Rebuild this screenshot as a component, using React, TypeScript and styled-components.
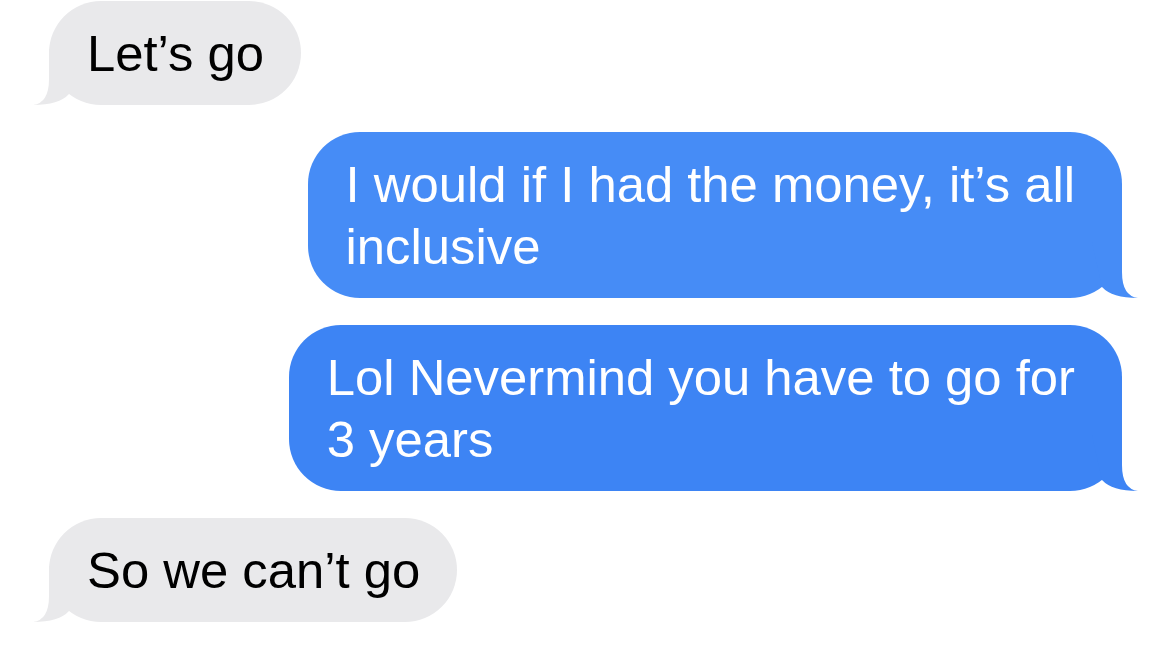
import styled, { createGlobalStyle } from 'styled-components';

const GlobalStyle = createGlobalStyle`
  html, body {
    margin: 0;
    padding: 0;
    background: #ffffff;
    overflow: hidden;
  }
`;

const GRAY = '#e9e9eb';

const Thread = styled.div`
  display: flex;
  flex-direction: column;
  gap: 27px;
  padding: 1px 48px 0 49px;
  font-family: 'Liberation Sans', Arial, sans-serif;
`;

const Bubble = styled.div<{ $sent?: boolean; $bg: string }>`
  position: relative;
  align-self: ${({ $sent }) => ($sent ? 'flex-end' : 'flex-start')};
  width: fit-content;
  padding: 22px ${({ $sent }) => ($sent ? '47px' : '37px')} 20px 38px;
  border-radius: 52px;
  background: ${({ $bg }) => $bg};
  color: ${({ $sent }) => ($sent ? '#ffffff' : '#000000')};
  font-size: 50.8px;
  line-height: 62px;
  white-space: nowrap;
`;

const Text = styled.span`
  position: relative;
  z-index: 1;
`;

const TailSvg = styled.svg<{ $sent?: boolean }>`
  position: absolute;
  bottom: 0;
  width: 56px;
  height: 56px;
  ${({ $sent }) =>
    $sent ? 'right: -16px;' : 'left: -16px; transform: scaleX(-1);'}
`;

const Tail = ({ sent, color }: { sent?: boolean; color: string }) => (
  <TailSvg $sent={sent} viewBox="0 0 56 56">
    <path
      d="M40,0 L40,30 Q40,54 56,56 Q30,56 20,45 L10,0 Z"
      fill={color}
    />
  </TailSvg>
);

type Message = { lines: string[]; sent?: boolean; color: string };

const messages: Message[] = [
  { lines: ['Let\u2019s go'], color: GRAY },
  {
    lines: ['I would if I had the money, it\u2019s all', 'inclusive'],
    sent: true,
    color: '#468cf6',
  },
  {
    lines: ['Lol Nevermind you have to go for', '3 years'],
    sent: true,
    color: '#3d84f4',
  },
  { lines: ['So we can\u2019t go'], color: GRAY },
];

const App = () => (
  <>
    <GlobalStyle />
    <Thread>
      {messages.map((m, i) => (
        <Bubble key={i} $sent={m.sent} $bg={m.color}>
          <Tail sent={m.sent} color={m.color} />
          <Text>
            {m.lines.map((line, j) => (
              <span key={j}>
                {j > 0 && <br />}
                {line}
              </span>
            ))}
          </Text>
        </Bubble>
      ))}
    </Thread>
  </>
);

export default App;
